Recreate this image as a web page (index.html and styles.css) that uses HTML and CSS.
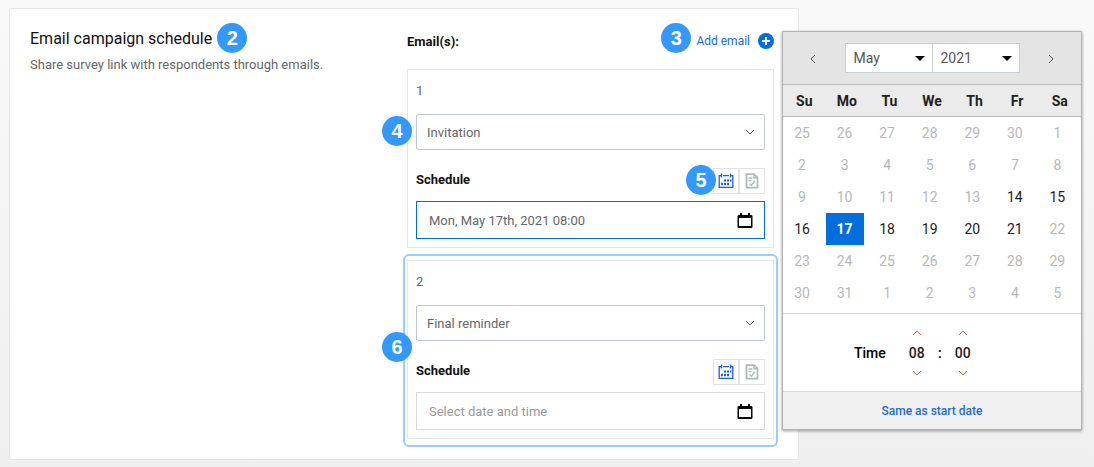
FILE: index.html
```
<!DOCTYPE html>
<html lang="en">
  <head>
    <meta charset="UTF-8" />
    <meta name="viewport" content="width=device-width, initial-scale=1.0" />
    <title>Email campaign schedule</title>
    <link rel="stylesheet" href="styles.css">
  </head>
  <body>
    <!-- Shared icons -->
    <svg class="sprite" aria-hidden="true">
      <symbol id="chevron" viewBox="0 0 10 6">
        <path d="M1 1l4 4 4-4" fill="none" stroke="currentColor" />
      </symbol>
      <symbol id="calendar" viewBox="0 0 16 16">
        <path d="M3.5 0.5v4M12.5 0.5v4" fill="none" stroke="currentColor" stroke-width="1.4" />
        <path d="M3 2.6H1.2v11.7h13.6V2.6H13M5 2.6h6" fill="none" stroke="currentColor" stroke-width="1.3" />
        <path d="M6 6.5h2v2H6zM9 6.5h2v2H9zM12 6.5h1.5v2H12zM3 9.8h2v2.4H3zM6 9.8h2v2.4H6zM9 9.8h2v2.4H9z" fill="currentColor" />
      </symbol>
      <symbol id="page-check" viewBox="0 0 16 16">
        <path d="M2.5 1.2h7.7l3.3 3.3v10.2h-11z" fill="none" stroke="currentColor" stroke-width="1.8" />
        <path d="M10 1.5v3.2h3.5M4.5 5h4M4.5 7.5h3M5.5 10.5l1.8 1.8 3.7-4.6" fill="none" stroke="currentColor" stroke-width="1.4" />
      </symbol>
      <symbol id="date" viewBox="0 0 16 16">
        <path d="M3 0h2v2h6V0h2v2h1.5l1 .8v11.4l-1 .8h-13l-1-.8V2.8l1-.8H3zM2 5v8h12V5z" fill="currentColor" fill-rule="evenodd" />
      </symbol>
    </svg>

    <main class="page">
      <section class="card">
        <div class="intro">
          <h1>Email campaign schedule <span class="badge">2</span></h1>
          <p>Share survey link with respondents through emails.</p>
        </div>

        <div class="emails">
          <div class="emails-header">
            <h2>Email(s):</h2>
            <span class="badge">3</span>
            <a class="add-email" href="#">
              Add email
              <svg width="16" height="16" viewBox="0 0 16 16">
                <circle cx="8" cy="8" r="8" fill="#006fdd" />
                <path d="M8 4v8M4 8h8" stroke="#fff" stroke-width="2" />
              </svg>
            </a>
          </div>

          <div class="email">
            <div class="number">1</div>
            <div class="type">
              <span class="badge badge-type">4</span>
              <select aria-label="Email type">
                <option>Invitation</option>
                <option>Final reminder</option>
              </select>
              <svg class="chevron" width="10" height="6"><use href="#chevron" /></svg>
            </div>
            <div class="schedule">
              <label for="date-1">Schedule</label>
              <span class="badge badge-tools">5</span>
              <div class="tools">
                <button class="active" aria-label="Pick a date"><svg width="16" height="16"><use href="#calendar" /></svg></button>
                <button aria-label="Pick a condition"><svg width="16" height="16"><use href="#page-check" /></svg></button>
              </div>
            </div>
            <div class="date active">
              <input type="text" id="date-1" value="Mon, May 17th, 2021 08:00" />
              <svg width="16" height="16"><use href="#date" /></svg>
            </div>
          </div>

          <div class="email highlighted">
            <span class="badge badge-email">6</span>
            <div class="number">2</div>
            <div class="type">
              <select aria-label="Email type">
                <option>Final reminder</option>
                <option>Invitation</option>
              </select>
              <svg class="chevron" width="10" height="6"><use href="#chevron" /></svg>
            </div>
            <div class="schedule">
              <label for="date-2">Schedule</label>
              <div class="tools">
                <button class="active" aria-label="Pick a date"><svg width="16" height="16"><use href="#calendar" /></svg></button>
                <button aria-label="Pick a condition"><svg width="16" height="16"><use href="#page-check" /></svg></button>
              </div>
            </div>
            <div class="date">
              <input type="text" id="date-2" placeholder="Select date and time" />
              <svg width="16" height="16"><use href="#date" /></svg>
            </div>
          </div>

          <!-- Date picker -->
          <div class="picker">
            <div class="picker-header">
              <button aria-label="Previous month"><svg width="6" height="10" viewBox="0 0 6 10"><path d="M5 1L1 5l4 4" /></svg></button>
              <div class="picker-selects">
                <div class="picker-select">
                  <select aria-label="Month"><option>May</option></select>
                  <svg width="10" height="5" viewBox="0 0 10 5"><path d="M0 0h10L5 5z" /></svg>
                </div>
                <div class="picker-select">
                  <select aria-label="Year"><option>2021</option></select>
                  <svg width="10" height="5" viewBox="0 0 10 5"><path d="M0 0h10L5 5z" /></svg>
                </div>
              </div>
              <button aria-label="Next month"><svg width="6" height="10" viewBox="0 0 6 10"><path d="M1 1l4 4-4 4" /></svg></button>
            </div>
            <table>
              <thead>
                <tr><th>Su</th><th>Mo</th><th>Tu</th><th>We</th><th>Th</th><th>Fr</th><th>Sa</th></tr>
              </thead>
              <tbody id="days"></tbody>
            </table>
            <div class="time">
              <span class="time-label">Time</span>
              <div class="spinner">
                <button aria-label="Hour up"><svg class="up" width="10" height="6"><use href="#chevron" /></svg></button>
                <input type="text" aria-label="Hour" value="08" />
                <button aria-label="Hour down"><svg width="10" height="6"><use href="#chevron" /></svg></button>
              </div>
              <span class="colon">:</span>
              <div class="spinner">
                <button aria-label="Minute up"><svg class="up" width="10" height="6"><use href="#chevron" /></svg></button>
                <input type="text" aria-label="Minute" value="00" />
                <button aria-label="Minute down"><svg width="10" height="6"><use href="#chevron" /></svg></button>
              </div>
            </div>
            <div class="picker-footer"><a href="#">Same as start date</a></div>
          </div>
        </div>
      </section>
    </main>

    <script>
      // Six weeks starting on Sunday, April 25th 2021
      const selected = 17;
      let rows = "";
      for (let week = 0; week < 6; week++) {
        rows += "<tr>";
        for (let day = 0; day < 7; day++) {
          const date = new Date(2021, 3, 25 + week * 7 + day);
          const n = date.getDate();
          const open = date.getMonth() === 4 && n >= 14 && n <= 21;
          const selectedClass = open && n === selected ? ' class="selected"' : "";
          rows += `<td><button${selectedClass}${open ? "" : " disabled"}>${n}</button></td>`;
        }
        rows += "</tr>";
      }
      document.getElementById("days").innerHTML = rows;
    </script>
  </body>
</html>
```
FILE: styles.css
```
* {
  box-sizing: border-box;
}
body {
  margin: 0;
  min-height: 100vh;
  font-family: Roboto, "Liberation Sans", sans-serif;
  font-size: 13px;
  color: #666;
  background: linear-gradient(#f9f9f9, #efefef);
}
button,
input,
select {
  font: inherit;
  color: inherit;
  margin: 0;
  border-radius: 0;
  outline: none;
}
button {
  display: flex;
  align-items: center;
  justify-content: center;
  padding: 0;
  border: none;
  background: none;
  cursor: pointer;
}
select {
  appearance: none;
  background: #fff;
}
a {
  color: #1a6cdb;
  text-decoration: none;
}
.sprite {
  position: absolute;
  width: 0;
  height: 0;
}

/* Card */
.page {
  padding: 8px 295px 7px 9px;
}
.card {
  display: grid;
  grid-template-columns: 1fr 1fr;
  gap: 10px;
  padding: 20px 24px 20px 20px;
  background: #fff;
  border: 1px solid #e6e6e6;
  border-radius: 3px;
}
.intro h1 {
  display: flex;
  align-items: center;
  gap: 5px;
  height: 18px;
  margin: 0;
  font-size: 16px;
  font-weight: 400;
  color: #111;
}
.intro p {
  margin: 8px 0 0;
  line-height: 20px;
}

/* Numbered markers */
.badge {
  display: flex;
  flex: none;
  align-items: center;
  justify-content: center;
  width: 30px;
  height: 30px;
  border-radius: 50%;
  background: #3399ff;
  color: #fff;
  font: bold 20px "Liberation Sans", sans-serif;
}
.badge-type,
.badge-tools,
.badge-email {
  position: absolute;
  z-index: 2;
}
.badge-type {
  top: 2px;
  left: -34px;
}
.badge-tools {
  top: -3px;
  right: 49px;
}
.badge-email {
  top: 71px;
  left: -26px;
}

/* Emails */
.emails {
  position: relative;
}
.emails-header {
  display: flex;
  align-items: center;
  height: 24px;
  margin-bottom: 16px;
}
.emails-header h2 {
  flex: 1;
  margin: 0;
  font-size: 13px;
  font-weight: 700;
  color: #111;
}
.emails-header .badge {
  margin: -6px 5px 0 0;
}
.add-email {
  display: flex;
  align-items: center;
  gap: 8px;
  font-size: 12px;
}
.email {
  position: relative;
  padding: 8px;
  border: 1px solid #e6e6e6;
}
.email + .email {
  margin-top: 12px;
}
.highlighted::before {
  content: "";
  position: absolute;
  inset: -7px -5px -9px;
  border: 2px solid #99ccff;
  border-radius: 6px;
  pointer-events: none;
}
.number {
  height: 26px;
  margin-bottom: 10px;
  line-height: 26px;
}
.type,
.date {
  position: relative;
}
.type select {
  display: block;
  width: 100%;
  height: 36px;
  padding: 0 10px;
  border: 1px solid #c1c7d2;
  border-radius: 2px;
}
.chevron {
  position: absolute;
  top: 15px;
  right: 10px;
  pointer-events: none;
}
.schedule {
  position: relative;
  display: flex;
  align-items: center;
  justify-content: space-between;
  margin: 18px 0 7px;
}
.schedule label {
  line-height: 24px;
  height: 26px;
  font-weight: 700;
  color: #111;
}
.tools {
  display: flex;
}
.tools button {
  width: 26px;
  height: 26px;
  border: 1px solid #e2e2e6;
  color: #b3b8b8;
}
.tools button.active {
  color: #1f62d8;
}
.date input {
  display: block;
  width: 100%;
  height: 38px;
  padding: 0 40px 0 12px;
  border: 1px solid #d9d9d9;
  background: #fff;
}
.date.active input {
  border-color: #006fcd;
}
.date input::placeholder {
  color: #999;
}
.date svg {
  position: absolute;
  top: 12px;
  right: 12px;
  color: #000;
}

/* Date picker */
.picker {
  position: absolute;
  top: 2px;
  left: calc(100% + 8px);
  z-index: 3;
  width: 300px;
  background: #fff;
  border: 1px solid #b3b3b3;
  box-shadow: 0 1px 3px rgba(0, 0, 0, 0.4);
  font-size: 14px;
  color: #222;
}
.picker-header {
  display: flex;
  align-items: center;
  justify-content: space-between;
  height: 53px;
  padding: 0 18px;
  background: #e4e4e4;
  border-bottom: 1px solid #b8b8b8;
}
.picker-header button {
  width: 24px;
  height: 24px;
  padding-top: 2px;
}
.picker-header button path {
  fill: none;
  stroke: #555;
}
.picker-selects {
  display: flex;
}
.picker-select {
  position: relative;
  width: 88px;
}
.picker-select + .picker-select {
  margin-left: -1px;
}
.picker-select select {
  display: block;
  width: 100%;
  height: 30px;
  padding: 0 8px;
  border: 1px solid #c8ced8;
  color: #555;
}
.picker-select svg {
  position: absolute;
  top: 13px;
  right: 8px;
  pointer-events: none;
}
.picker table {
  width: 100%;
  table-layout: fixed;
  border-spacing: 0;
}
.picker th {
  height: 32px;
  padding: 0;
  background: #ebebeb;
  border-bottom: 1px solid #b8b8b8;
}
.picker td {
  padding: 0;
}
.picker td button {
  width: 38px;
  height: 32px;
}
.picker td button:disabled {
  color: #b8b8b8;
  cursor: default;
}
.picker td .selected {
  background: #006fdd;
  color: #fff;
  font-weight: 700;
}
.time {
  display: flex;
  align-items: center;
  height: 78px;
  margin-top: 4px;
  padding-left: 71px;
  border-top: 1px solid #d9d9d9;
  font-weight: 500;
}
.time-label {
  margin-right: 16px;
  color: #000;
}
.spinner {
  width: 30px;
}
.spinner button {
  width: 100%;
  height: 16px;
  color: #b07055;
}
.spinner .up {
  transform: rotate(180deg);
}
.spinner input {
  display: block;
  width: 100%;
  height: 24px;
  padding: 0;
  border: none;
  text-align: center;
}
.colon {
  width: 16px;
  text-align: center;
  color: #000;
}
.picker-footer {
  display: flex;
  align-items: center;
  justify-content: center;
  height: 38px;
  background: #f0f0f0;
  border-top: 1px solid #d9d9d9;
  font-size: 12px;
  font-weight: 500;
}
```
